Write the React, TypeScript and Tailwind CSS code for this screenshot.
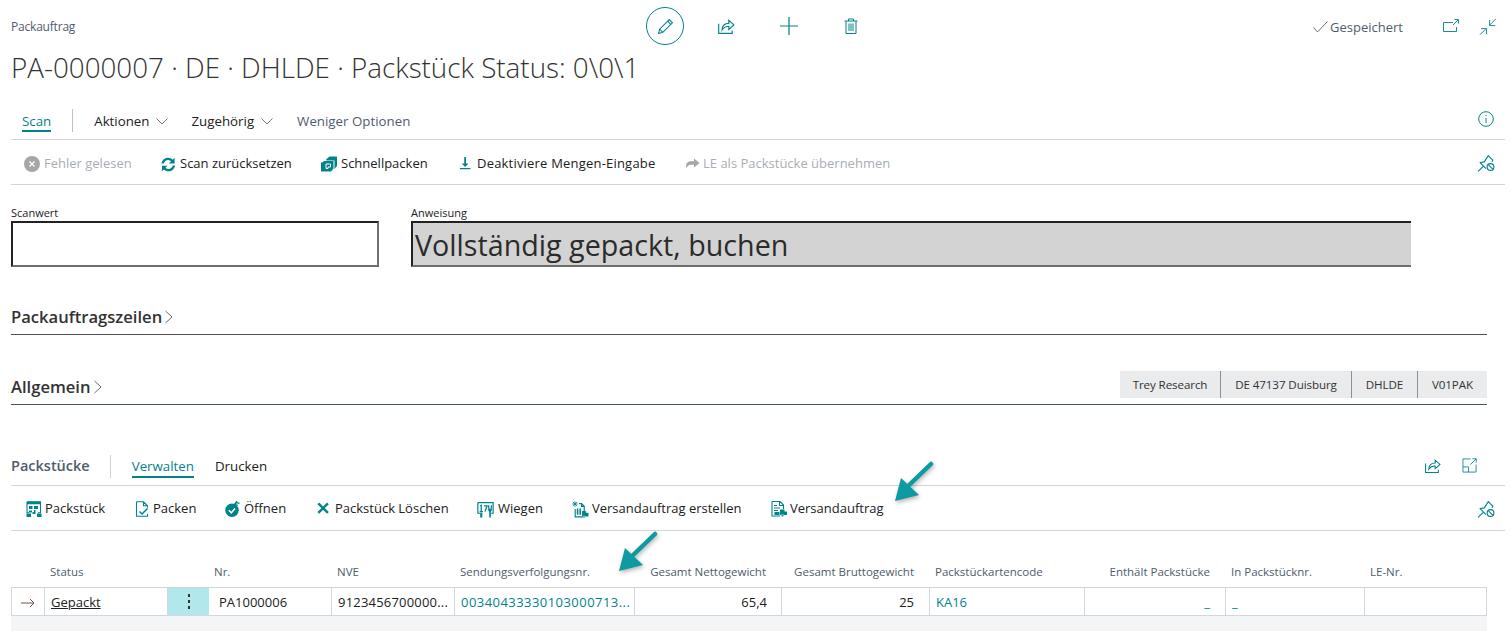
import type { ReactNode } from 'react'

const teal = '#00838a'

function Ico({ size = 16, children, className = '' }: { size?: number; children: ReactNode; className?: string }) {
	return (
		<svg width={size} height={size} viewBox="0 0 16 16" fill="none" stroke={teal} strokeWidth="1" className={`shrink-0 ${className}`}>
			{children}
		</svg>
	)
}

const ShareIcon = ({ size = 18 }: { size?: number }) => (
	<Ico size={size}>
		<path d="M1.500 6v8.500h12V12" />
		<path d="M4.500 11.500c.2-3.800 2.800-5.800 6-5.800V3l4.500 4-4.500 4V8.500c-2.500-.2-4.500.8-6 3z" />
	</Ico>
)

const PinOff = () => (
	<Ico size={18}>
		<path d="M1 15.500l4.500-4.500M2.500 7.500l4-.5 3.500-5.500 4 4-.7 1.500M2.500 7.500l5.500 5.500" />
		<circle cx="12" cy="11.500" r="3" />
		<path d="M10 9.500l4 4" />
	</Ico>
)

const Chevron = () => (
	<svg width="12" height="7" viewBox="0 0 12 7" fill="none" stroke="#505c6d" strokeWidth="0.8" className="ml-[7px]">
		<path d="M.5 .5L6 6l5.500-5.500" />
	</svg>
)

const SmallChevron = () => (
	<svg width="8" height="14" viewBox="0 0 8 14" fill="none" stroke="#505c6d" strokeWidth="0.9" className="ml-[3px]">
		<path d="M.5 1l6.500 6-6.500 6" />
	</svg>
)

const solid = { fill: teal, stroke: 'none' }

const toolIcons: Record<string, ReactNode> = {
	error: (
		<svg width="16" height="16" viewBox="0 0 16 16" className="shrink-0">
			<circle cx="8" cy="8" r="8" fill="#a6a6a6" />
			<path d="M5.500 5.500l5 5M10.500 5.500l-5 5" stroke="#fff" strokeWidth="1.200" />
		</svg>
	),
	reset: (
		<Ico size={15}>
			<path {...solid} d="M.5 7C1 3.300 4 .8 7.500 .8c2 0 3.700.8 4.900 2L14.500 .8v6h-6l2.200-2.200C9.800 3.700 8.700 3.200 7.500 3.200 5.300 3.200 3.500 4.800 3 7zM15 9c-.5 3.700-3.500 6.200-7 6.200-2 0-3.700-.8-4.900-2L1 15.200v-6h6l-2.200 2.200c.9.900 2 1.400 3.200 1.400 2.200 0 4-1.600 4.500-3.800z" />
		</Ico>
	),
	quick: (
		<Ico>
			<path {...solid} d="M5 3.500L8.500 .5H16v9.500l-2.500 3V4.500H5.500z" />
			<path {...solid} d="M1.500 6.500l1.500-1.500h9.500v7.500L10 15.500H0V6.500z" />
			<path d="M5 8h4.500v3H7v1.500H5z" stroke="#fff" strokeWidth="1" />
		</Ico>
	),
	down: (
		<Ico size={14}>
			<path {...solid} d="M6 0h2v7.500h2.800L7 11.500l-3.800-4H6zM1 12.500h12V14H1z" />
		</Ico>
	),
	forward: (
		<svg width="15" height="12" viewBox="0 0 15 12" className="shrink-0">
			<path fill="#a6a6a6" d="M9 .5l5.500 4.500L9 9.500V6.800H5.500c-1.500 0-2.800.9-4 3.500C.2 5.500 2.500 3.200 6 3.200h3z" />
		</svg>
	),
	box: (
		<Ico>
			<path d="M1 .8h13.500v11H12M1 .8v11h2" strokeWidth="1.100" />
			<path {...solid} d="M1 .8h13.500v2.400H1zM3 5h3.500v3H3zM8 5h4v3H8zM3 9.500h3v2H3zM8 9h1.500v3H8zM.5 12.500h4.500V16H.5zM11 12.500h4.500V16H11zM6.500 11h3v2h-3z" />
		</Ico>
	),
	pack: (
		<Ico>
			<path d="M2.500 .8h7l4 4v2M9.500 .8v4h4M2.500 .8v14.400h11V13" strokeWidth="1.100" />
			<path d="M5.500 10.500l2.500 2.500 5.500-5.500" strokeWidth="1.500" />
		</Ico>
	),
	open: (
		<Ico>
			<circle {...solid} cx="7" cy="9.300" r="6.700" />
			<path d="M3.800 9.300l2.500 2.500 3.700-4.300" stroke="#fff" strokeWidth="1.500" />
			<path d="M9.500 3.300c1.300-1.600 3-1.800 5-1M12 0l-2.500 3.300 3.300 1" strokeWidth="1.300" />
		</Ico>
	),
	x: (
		<Ico size={14}>
			<path d="M1.500 1.500l11 11M12.500 1.500l-11 11" strokeWidth="2.700" />
		</Ico>
	),
	weigh: (
		<Ico size={17}>
			<path d="M.8 1.500h14.400v10h-2M.8 1.500v10H3" strokeWidth="1.100" />
			<path d="M3 4.500l1-.5v6M2.500 10h3M6.500 4.500h3L7.500 10M11 4v3M13.500 4v3" strokeWidth="1.200" />
			<path {...solid} d="M3 11h2v4.500H3zM10.500 7h3.500v2l-1 1v5.500h-1.500V10l-1-1z" />
		</Ico>
	),
	shipNew: (
		<Ico size={17}>
			<path d="M3 7.500v7.500h8.500V5L9 2.500H6.500M9 2.500V5h2.500" strokeWidth="1.100" />
			<path d="M.8 .8l4 4M4.800 .8l-4 4M2.800 .2v5.200M.2 2.800h5.200" strokeWidth=".8" />
			<path {...solid} d="M4.500 7h1.500v6H4.500zM7 7h1.500v6H7zM9.500 9.500H13v1.500h2.500v3.500h-6z" />
			<circle cx="11.300" cy="15" r="1" fill={teal} stroke="#fff" strokeWidth=".5" />
		</Ico>
	),
	ship: (
		<Ico>
			<path d="M1 .5h8l3.500 3.500v4M1 .5V15h8M8.500 .5v4h4" strokeWidth="1.100" />
			<path d="M3 4.500h3M3 7h6M3 9.500h4" strokeWidth="1.200" />
			<path {...solid} d="M3.500 11h5V14h-5zM9 8.500h4.500v2H16v3.500H9z" />
			<circle cx="11.500" cy="14.500" r="1.200" fill={teal} stroke="#fff" strokeWidth=".5" />
		</Ico>
	),
}

function ToolItem({ icon, label, disabled, className = '' }: { icon: string; label: string; disabled?: boolean; className?: string }) {
	return (
		<div className={`flex items-center whitespace-nowrap ${disabled ? 'text-[#a9aeb5]' : 'text-[#212121]'} ${className}`}>
			{toolIcons[icon]}
			<span>{label}</span>
		</div>
	)
}

function Arrow({ className }: { className: string }) {
	return (
		<svg width="48" height="46" viewBox="0 0 48 46" className={`absolute drop-shadow-[1px_2px_2px_rgba(0,0,0,0.3)] ${className}`}>
			<path d="M39 4L13 29" stroke="#0d9aa0" strokeWidth="4.500" strokeLinecap="round" />
			<path d="M3 41L9 18 27 35z" fill="#0d9aa0" />
		</svg>
	)
}

const cols = 'grid grid-cols-[34px_123px_41px_123px_123px_180px_147px_148px_155px_141px_139px_122px]'
const bd = 'border-r border-[#d4d6d9] h-full flex items-center pt-[2px]'

export default function App() {
	return (
		<div className="relative w-[1510px] h-[631px] overflow-hidden bg-white text-[13px] text-[#212121] font-['Open_Sans',sans-serif]">
			{/* page header */}
			<div className="relative h-[105px] pl-[11px] pr-[5px]">
				<div className="pt-[19px] text-[12px] leading-[16px] tracking-[-0.2px] text-[#505c6d]">Packauftrag</div>
				<h1 className="mt-[13px] text-[27.8px] leading-[38px] font-light text-[#333]">PA-0000007 · DE · DHLDE · Packstück Status: 0\0\1</h1>
				<div className="absolute left-[646px] top-[7px] flex items-center">
					<div className="w-[38px] h-[38px] rounded-full border border-[#00838a] flex items-center justify-center">
						<Ico size={17}><path d="M1.500 14.500l1-4L11.500 1.500l3 3-9 9zM2.500 10.500l3 3M10 3l3 3" /></Ico>
					</div>
					<div className="ml-[33px]"><ShareIcon /></div>
					<div className="ml-[45px]">
						<Ico size={18}><path d="M8 0v16M0 8h16" strokeWidth="1.100" /></Ico>
					</div>
					<div className="ml-[45px]">
						<Ico size={16}><path d="M1.500 3h13M5.500 3V1h5v2M3 3v12.500h10V3M6 5.500v7.500M8 5.500v7.500M10 5.500v7.500" /></Ico>
					</div>
				</div>
				<div className="absolute right-[13px] top-[17px] flex items-center text-[#505c6d]">
					<svg width="15" height="12" viewBox="0 0 15 12" fill="none" stroke="#505c6d" strokeWidth=".9"><path d="M.5 6.500l4 4.500L14.500 .5" /></svg>
					<span className="ml-[2px] leading-[20px]">Gespeichert</span>
					<div className="ml-[40px]">
						<Ico size={16}><path d="M10 3.500H.5v9h13V8M10 6l5-5M11.500 .5H15.500V4.500" strokeWidth=".9" /></Ico>
					</div>
					<div className="ml-[20px]">
						<Ico size={18}><path d="M1 16.500l6-6M2 10.500h5.500V16M16.500 1l-6 6M16 7.500h-5.500V2" strokeWidth=".9" transform="scale(.9)" /></Ico>
					</div>
				</div>
			</div>

			{/* tabs */}
			<div className="relative ml-[11px] mr-[5px] h-[35px] border-b border-[#d2d4d6] flex items-start text-[13.3px]">
				<div className="ml-[11px] mt-[6px] h-[21px] leading-[20px] border-b-2 border-[#00838a] text-[#00838a]">Scan</div>
				<div className="ml-[21px] mt-[4px] w-px h-[23px] bg-[#bcc1c7]" />
				<div className="ml-[21px] mt-[6px] leading-[20px] flex items-center">Aktionen<Chevron /></div>
				<div className="ml-[23px] mt-[6px] leading-[20px] flex items-center">Zugehörig<Chevron /></div>
				<div className="ml-[24px] mt-[6px] leading-[20px] text-[#505c6d]">Weniger Optionen</div>
				<div className="absolute right-[11px] top-[6px]">
					<Ico size={16}><circle cx="8" cy="8" r="7.300" /><path d="M8 7v5M8 4v1.200" /></Ico>
				</div>
			</div>
			<div className="relative ml-[11px] mr-[5px] h-[45px] border-b border-[#d2d4d6] flex items-center pl-[13px] pt-[4px]">
				<ToolItem icon="error" label="Fehler gelesen" disabled className="w-[137px] gap-[4px]" />
				<ToolItem icon="reset" label="Scan zurücksetzen" className="w-[160px] gap-[4px]" />
				<ToolItem icon="quick" label="Schnellpacken" className="w-[138px] gap-[4px]" />
				<ToolItem icon="down" label="Deaktiviere Mengen-Eingabe" className="w-[226px] gap-[4px] tracking-[0.2px]" />
				<ToolItem icon="forward" label="LE als Packstücke übernehmen" disabled className="gap-[3px]" />
				<div className="absolute right-[10px] top-[14px]"><PinOff /></div>
			</div>

			{/* scan fields */}
			<div className="flex pl-[11px] mt-[20px]">
				<div className="w-[368px]">
					<div className="text-[11px] leading-[15px]">Scanwert</div>
					<div className="h-[46px] mt-[1px] border-2 border-[#6e6e6e] border-l-[#222] border-t-[#222]" />
				</div>
				<div className="w-[1000px] ml-[32px]">
					<div className="text-[11px] leading-[15px]">Anweisung</div>
					<div className="h-[46px] mt-[1px] border-2 border-[#6e6e6e] border-l-[#222] border-t-[#222] border-r-0 bg-[#d3d3d3] text-[28.7px] leading-[44px] pl-[2px] text-[#2b2b2b]">Vollständig gepackt, buchen</div>
				</div>
			</div>

			{/* collapsed groups */}
			<div className="ml-[11px] w-[1476px] mt-[37px] h-[31px] border-b border-[#505050] flex items-center pb-[4px] text-[16.600px] font-semibold text-[#333]">
				Packauftragszeilen<SmallChevron />
			</div>
			<div className="ml-[11px] w-[1476px] mt-[39px] h-[31px] border-b border-[#44546a] flex items-start justify-between">
				<div className="flex items-center h-[26px] text-[16.600px] font-semibold text-[#333]">Allgemein<SmallChevron /></div>
				<div className="flex h-[27px] -mt-[3px] bg-[#eaebec] text-[11.600px] text-[#333] tracking-[-0.1px] text-center leading-[27px]">
					<div className="w-[101px] border-r border-[#8f8f8f]">Trey Research</div>
					<div className="w-[131px] border-r border-[#8f8f8f]">DE 47137 Duisburg</div>
					<div className="w-[66px] border-r border-[#8f8f8f]">DHLDE</div>
					<div className="w-[69px]">V01PAK</div>
				</div>
			</div>

			{/* packages part */}
			<div className="relative ml-[11px] mr-[5px] mt-[46px] h-[35px] border-b border-[#d2d4d6] flex items-start text-[13.3px]">
				<div className="mt-[5px] leading-[20px] text-[14.5px] font-semibold text-[#505c6d]">Packstücke</div>
				<div className="ml-[20px] mt-[4px] w-px h-[23px] bg-[#cfd2d6]" />
				<div className="ml-[21px] mt-[5px] h-[22px] leading-[20px] border-b-2 border-[#00838a] text-[#00838a]">Verwalten</div>
				<div className="ml-[21px] mt-[5px] leading-[20px]">Drucken</div>
				<div className="absolute right-[64px] top-[6px]"><ShareIcon size={17} /></div>
				<div className="absolute right-[28px] top-[7px]">
					<Ico size={15}><path d="M9 1H1v14h14V7M1 9.500h6V15M9 7l6-6M11 .8h4.200V5" strokeWidth=".9" /></Ico>
				</div>
			</div>
			<div className="relative ml-[11px] mr-[5px] h-[45px] border-b border-[#d2d4d6] flex items-center pl-[15px] pt-[2px]">
				<ToolItem icon="box" label="Packstück" className="w-[108px] gap-[3px]" />
				<ToolItem icon="pack" label="Packen" className="w-[91px] gap-[3px]" />
				<ToolItem icon="open" label="Öffnen" className="w-[92px] gap-[3px]" />
				<ToolItem icon="x" label="Packstück Löschen" className="w-[160px] gap-[4px]" />
				<ToolItem icon="weigh" label="Wiegen" className="w-[95px] gap-[4px]" />
				<ToolItem icon="shipNew" label="Versandauftrag erstellen" className="w-[199px] gap-[3px]" />
				<ToolItem icon="ship" label="Versandauftrag" className="gap-[3px]" />
				<div className="absolute right-[10px] top-[14px]"><PinOff /></div>
			</div>

			{/* lines */}
			<div className="ml-[11px] w-[1476px] mt-[33px]">
				<div className={`${cols} h-[23px] text-[11.5px] leading-[16px] text-[#505c6d]`}>
					<div />
					<div className="pl-[5px]">Status</div>
					<div />
					<div className="pl-[5px]">Nr.</div>
					<div className="pl-[5px]">NVE</div>
					<div className="pl-[5px]">Sendungsverfolgungsnr.</div>
					<div className="pr-[16px] text-right">Gesamt Nettogewicht</div>
					<div className="pr-[16px] text-right">Gesamt Bruttogewicht</div>
					<div className="pl-[5px]">Packstückartencode</div>
					<div className="pr-[16px] text-right">Enthält Packstücke</div>
					<div className="pl-[5px]">In Packstücknr.</div>
					<div className="pl-[5px]">LE-Nr.</div>
				</div>
				<div className={`${cols} h-[29px] border-y border-[#d4d6d9]`}>
					<div className={`${bd} border-l justify-center`}>
						<svg width="14" height="10" viewBox="0 0 14 10" fill="none" stroke="#6b3f37" strokeWidth=".9"><path d="M0 5h13M9 1l4 4-4 4" /></svg>
					</div>
					<div className={`${bd} pl-[6px] underline`}>Gepackt</div>
					<div className="bg-[#b2e8eb] h-full flex flex-col items-center justify-center gap-[3px]">
						<div className="w-[2px] h-[3px] bg-[#333]" />
						<div className="w-[2px] h-[3px] bg-[#333]" />
						<div className="w-[2px] h-[3px] bg-[#333]" />
					</div>
					<div className={`${bd} pl-[10px]`}>PA1000006</div>
					<div className={`${bd} pl-[6px] tracking-[0.2px]`}>9123456700000...</div>
					<div className={`${bd} pl-[6px] text-[#00838a] tracking-[0.45px]`}>00340433330103000713...</div>
					<div className={`${bd} justify-end pr-[14px]`}>65,4</div>
					<div className={`${bd} justify-end pr-[15px]`}>25</div>
					<div className={`${bd} pl-[6px] text-[#00838a]`}>KA16</div>
					<div className={`${bd} justify-end pr-[15px] text-[#00838a]`}>_</div>
					<div className={`${bd} pl-[6px] text-[#00838a]`}>_</div>
					<div className={bd} />
				</div>
				<div className="h-[16px] bg-[#f4f5f6]" />
			</div>

			<Arrow className="left-[892px] top-[460px]" />
			<Arrow className="left-[616px] top-[530px]" />
		</div>
	)
}
